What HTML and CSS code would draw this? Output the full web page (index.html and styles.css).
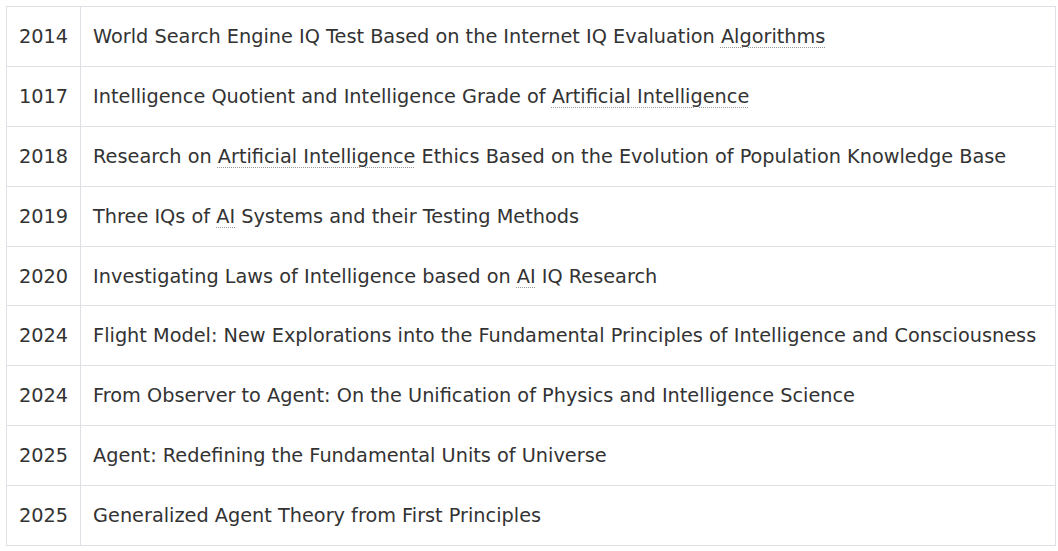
FILE: index.html
```html
<!DOCTYPE html>
<html lang="en">
<head>
<meta charset="utf-8">
<title>Publications</title>
<link rel="stylesheet" href="styles.css">
</head>
<body>
<table class="papers">
  <tbody>
    <tr><td class="year">2014</td><td class="title">World Search Engine IQ Test Based on the Internet IQ Evaluation <abbr title="Algorithms">Algorithms</abbr></td></tr>
    <tr><td class="year">1017</td><td class="title">Intelligence Quotient and Intelligence Grade of <abbr title="AI">Artificial Intelligence</abbr></td></tr>
    <tr><td class="year">2018</td><td class="title">Research on <abbr title="AI">Artificial Intelligence</abbr> Ethics Based on the Evolution of Population Knowledge Base</td></tr>
    <tr><td class="year">2019</td><td class="title">Three IQs of <abbr title="Artificial Intelligence">AI</abbr> Systems and their Testing Methods</td></tr>
    <tr><td class="year">2020</td><td class="title">Investigating Laws of Intelligence based on <abbr title="Artificial Intelligence">AI</abbr> IQ Research</td></tr>
    <tr><td class="year">2024</td><td class="title">Flight Model: New Explorations into the Fundamental Principles of Intelligence and Consciousness</td></tr>
    <tr><td class="year">2024</td><td class="title">From Observer to Agent: On the Unification of Physics and Intelligence Science</td></tr>
    <tr><td class="year">2025</td><td class="title">Agent: Redefining the Fundamental Units of Universe</td></tr>
    <tr><td class="year">2025</td><td class="title">Generalized Agent Theory from First Principles</td></tr>
  </tbody>
</table>
</body>
</html>
```
FILE: styles.css
```css
html, body {
  margin: 0;
  background: #ffffff;
}
body {
  padding: 6px 3px 6px 6px;
  font-family: "DejaVu Sans", Verdana, sans-serif;
  font-size: 19.3px;
  color: #333333;
}
.papers {
  border-collapse: collapse;
  width: 1050px;
}
.papers td {
  border: 1px solid #dfe0e5;
  height: 58.9px;
  padding: 0 12px;
  vertical-align: middle;
  white-space: nowrap;
}
.papers .year {
  width: 49px;
}
.papers abbr {
  text-decoration: underline dotted #999999;
  text-underline-offset: 4px;
  text-decoration-thickness: 1px;
}
```
